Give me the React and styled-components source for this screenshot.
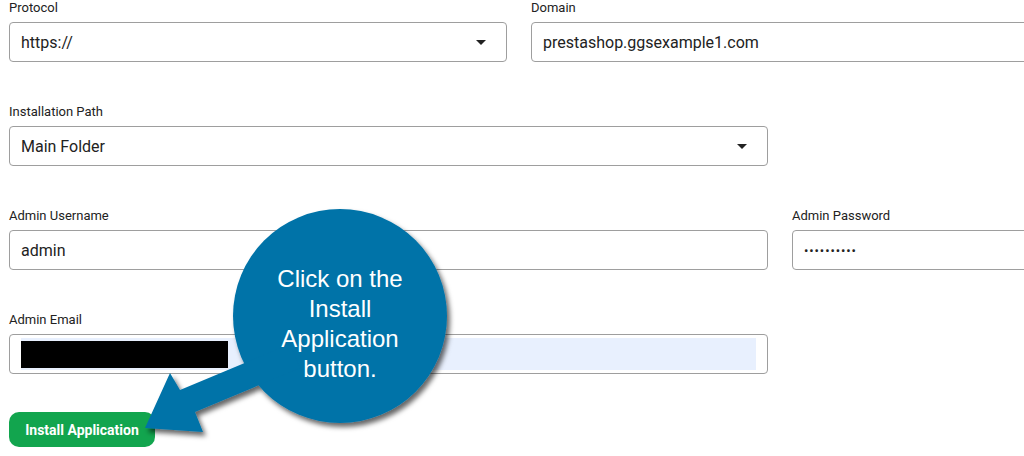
import React from 'react';
import styled, { createGlobalStyle } from 'styled-components';

const GlobalStyle = createGlobalStyle`
    html, body {
        margin: 0;
        padding: 0;
        background: #ffffff;
        overflow: hidden;
    }
    body {
        font-family: Roboto, "Liberation Sans", Arial, sans-serif;
    }
`;

function Field({ label, span, children }) {
    return (
        <FieldWrap span={span}>
            <Label>{label}</Label>
            {children}
        </FieldWrap>
    );
}

export default function App() {
    return (
        <Page>
            <GlobalStyle />
            <Form>
                <Field label="Protocol" span={2}>
                    <Box>
                        <Value>https://</Value>
                        <Caret />
                    </Box>
                </Field>
                <Field label="Domain" span={2}>
                    <Box>
                        <Value>prestashop.ggsexample1.com</Value>
                    </Box>
                </Field>
                <Field label="Installation Path" span={3}>
                    <Box>
                        <Value>Main Folder</Value>
                        <Caret />
                    </Box>
                </Field>
                <Spacer />
                <Field label="Admin Username" span={3}>
                    <Box>
                        <Value>admin</Value>
                    </Box>
                </Field>
                <Field label="Admin Password" span={1}>
                    <Box>
                        <Dots>••••••••••</Dots>
                    </Box>
                </Field>
                <Field label="Admin Email" span={3}>
                    <Box autofill>
                        <Autofill>
                            <Redacted />
                        </Autofill>
                    </Box>
                </Field>
            </Form>
            <ButtonRow>
                <InstallButton>Install Application</InstallButton>
            </ButtonRow>

            <Overlay width="1024" height="456" viewBox="0 0 1024 456">
                <defs>
                    <filter id="shadow" x="-20%" y="-20%" width="140%" height="140%">
                        <feDropShadow dx="3" dy="4" stdDeviation="2.5" floodColor="#000" floodOpacity="0.6" />
                    </filter>
                </defs>
                <g filter="url(#shadow)" fill="#0673a8">
                    <circle cx="340" cy="316" r="107" />
                    <polygon points="145,428 170,373 180,390 290,344 300,368 195,412 203,432" />
                </g>
            </Overlay>
            <Callout>
                Click on the<br />Install<br />Application<br />button.
            </Callout>
        </Page>
    );
}

const Page = styled.div`
    position: relative;
    width: 1024px;
    height: 456px;
    overflow: hidden;
    padding: 0 0 0 9px;
    box-sizing: border-box;
`;

const Form = styled.div`
    display: grid;
    grid-template-columns: repeat(4, 237px);
    column-gap: 24px;
    row-gap: 42px;
`;

const FieldWrap = styled.div`
    grid-column: span ${props => props.span};
    display: flex;
    flex-direction: column;
`;

const Spacer = styled.div``;

const Label = styled.div`
    font-size: 13px;
    line-height: 16px;
    color: #222;
    margin-bottom: 6px;
`;

const Box = styled.div`
    height: 40px;
    box-sizing: border-box;
    border: 1px solid #9e9e9e;
    border-radius: 4px;
    display: flex;
    align-items: center;
    padding: ${props => (props.autofill ? '3px 11px' : '0 20px 0 11px')};
    background: #fff;
`;

const Value = styled.span`
    flex: 1;
    font-size: 16px;
    color: #222;
`;

const Dots = styled.span`
    font-size: 13px;
    letter-spacing: 0.9px;
    color: #222;
`;

const Caret = styled.span`
    width: 0;
    height: 0;
    border-left: 5px solid transparent;
    border-right: 5px solid transparent;
    border-top: 5px solid #222;
`;

const Autofill = styled.div`
    flex: 1;
    height: 100%;
    background: #e8f0fe;
    display: flex;
    align-items: center;
`;

const Redacted = styled.div`
    width: 207px;
    height: 27px;
    background: #000;
`;

const ButtonRow = styled.div`
    display: flex;
    margin-top: 38px;
`;

const InstallButton = styled.button`
    width: 146px;
    height: 35px;
    border: none;
    border-radius: 10px;
    background: #12a54e;
    color: #fff;
    font-family: Roboto, "Liberation Sans", Arial, sans-serif;
    font-weight: 700;
    font-size: 14px;
    padding: 0;
`;

const Overlay = styled.svg`
    position: absolute;
    left: 0;
    top: 0;
    pointer-events: none;
`;

const Callout = styled.div`
    position: absolute;
    left: 240px;
    top: 264px;
    width: 200px;
    text-align: center;
    color: #fff;
    font-family: "Liberation Sans", Arial, sans-serif;
    font-size: 24px;
    line-height: 30px;
`;
